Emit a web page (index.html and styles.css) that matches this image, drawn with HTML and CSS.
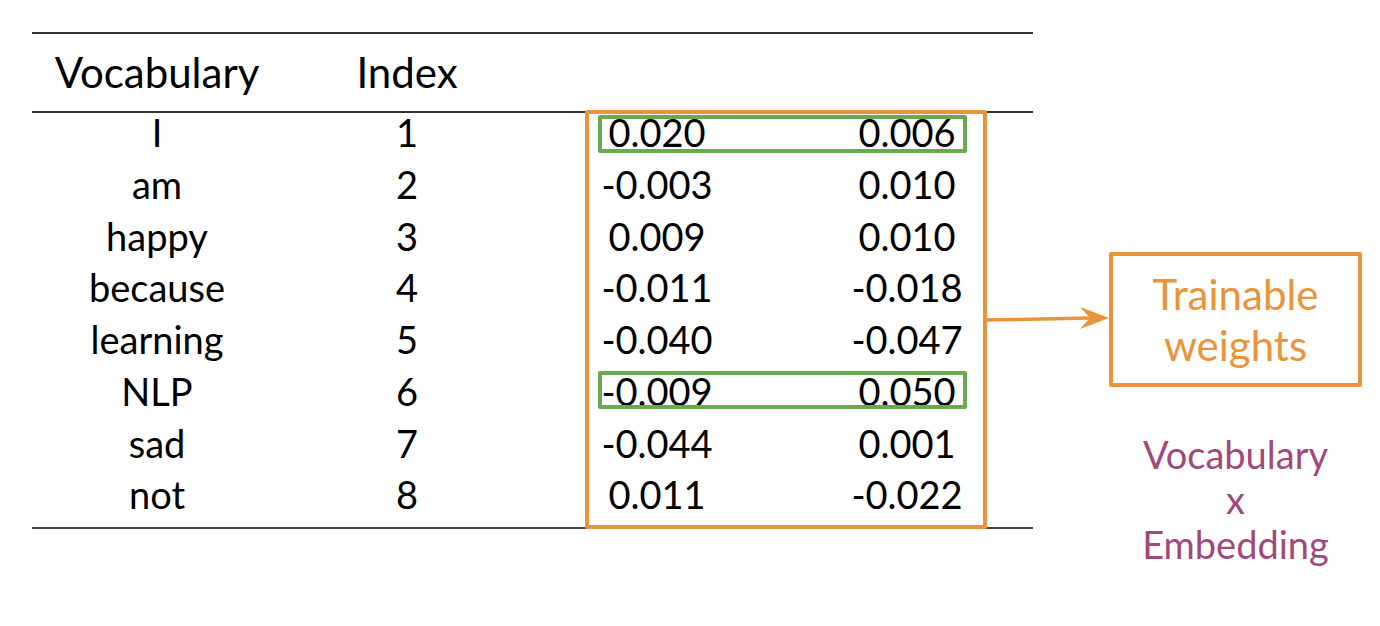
FILE: index.html
```html
<!DOCTYPE html>
<html>
<head>
<meta charset="utf-8">
<link rel="stylesheet" href="styles.css">
</head>
<body>
<div class="slide">
  <div class="table">
    <div class="row head"><div>Vocabulary</div><div>Index</div><div></div><div></div></div>
    <div class="tbody">
      <div class="row"><div>I</div><div>1</div><div>0.020</div><div>0.006</div></div>
      <div class="row"><div>am</div><div>2</div><div>-0.003</div><div>0.010</div></div>
      <div class="row"><div>happy</div><div>3</div><div>0.009</div><div>0.010</div></div>
      <div class="row"><div>because</div><div>4</div><div>-0.011</div><div>-0.018</div></div>
      <div class="row"><div>learning</div><div>5</div><div>-0.040</div><div>-0.047</div></div>
      <div class="row"><div>NLP</div><div>6</div><div>-0.009</div><div>0.050</div></div>
      <div class="row"><div>sad</div><div>7</div><div>-0.044</div><div>0.001</div></div>
      <div class="row"><div>not</div><div>8</div><div>0.011</div><div>-0.022</div></div>
    </div>
  </div>
  <div class="side">
    <div class="weights">Trainable<br>weights</div>
    <div class="caption">Vocabulary<br>x<br>Embedding</div>
  </div>
  <div class="matrix-frame"></div>
  <div class="hl hl-1"></div>
  <div class="hl hl-6"></div>
  <svg class="arrow" width="130" height="40" viewBox="0 0 130 40">
    <line x1="0" y1="22" x2="106" y2="20" stroke="#E9943B" stroke-width="3.5"/>
    <polygon points="123,20 94,9 104,20 94,31" fill="#E9943B"/>
  </svg>
</div>
</body>
</html>
```
FILE: styles.css
```css
html, body {
  margin: 0;
  padding: 0;
  background: #ffffff;
}
.slide {
  position: relative;
  width: 1380px;
  height: 626px;
  display: flex;
  align-items: flex-start;
  font-family: Lato, "Noto Sans", sans-serif;
  color: #000;
  overflow: hidden;
}
.table {
  margin-left: 32px;
  margin-top: 32px;
  width: 1001px;
  border-top: 2px solid #333;
  border-bottom: 2px solid #444;
}
.row {
  display: grid;
  grid-template-columns: 250px 250px 250px 250px;
  font-size: 38px;
  text-align: center;
}
.row.head {
  height: 77px;
  font-size: 42px;
  line-height: 77px;
  border-bottom: 2px solid #333;
}
.tbody .row {
  height: 51.75px;
  line-height: 38px;
}
.side {
  margin-left: 76px;
  margin-top: 252px;
  display: flex;
  flex-direction: column;
  align-items: center;
}
.weights {
  width: 245px;
  height: 114px;
  padding-top: 13px;
  border: 4px solid #E9943B;
  border-radius: 2px;
  color: #E9943B;
  font-size: 42px;
  line-height: 51px;
  text-align: center;
}
.caption {
  margin-top: 45px;
  color: #A3487A;
  font-size: 38px;
  line-height: 45px;
  text-align: center;
}
.matrix-frame {
  position: absolute;
  left: 585px;
  top: 110px;
  width: 394px;
  height: 411px;
  border: 4px solid #E9943B;
  border-radius: 2px;
}
.hl {
  position: absolute;
  left: 598px;
  width: 361px;
  height: 30px;
  border: 4px solid #6BA84F;
  border-radius: 2px;
}
.hl-1 { top: 115px; }
.hl-6 { top: 371px; }
.arrow {
  position: absolute;
  left: 986px;
  top: 298px;
}
```
